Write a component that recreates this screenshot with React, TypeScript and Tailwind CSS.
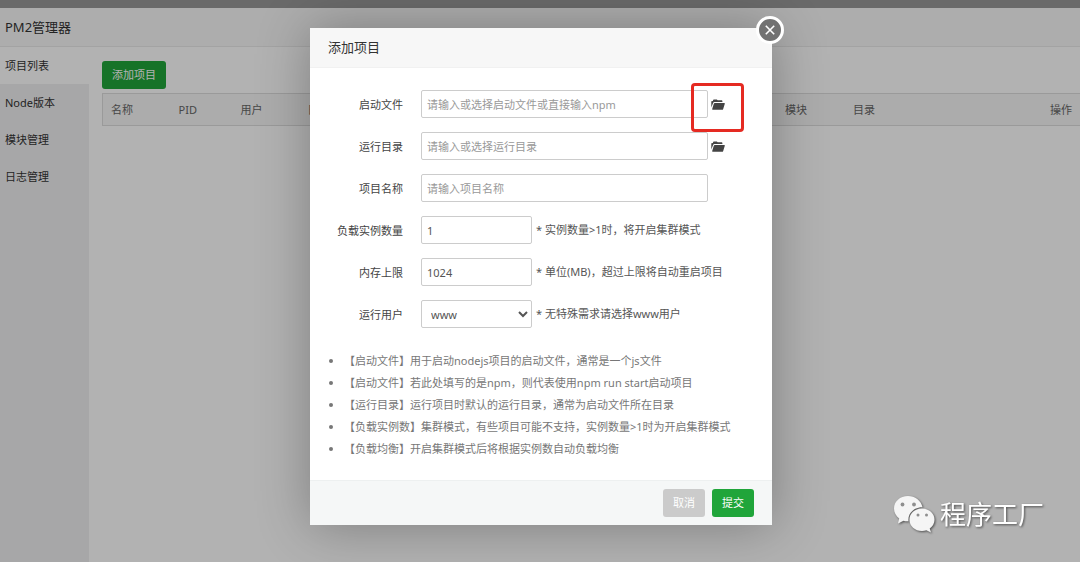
import React from 'react';

const menuItems = ['项目列表', 'Node版本', '模块管理', '日志管理'];

const columns = [
  { label: '名称', className: 'w-[68px]' },
  { label: 'PID', className: 'w-[62px]' },
  { label: '用户', className: 'w-[67px]' },
  { label: '日志', className: 'w-[68px]' },
  { label: '', className: '' },
  { label: '模块', className: 'w-[68px]' },
  { label: '目录', className: 'w-[178px]' },
  { label: '操作', className: 'w-[57px] text-right' }
];

const tips = [
  '【启动文件】用于启动nodejs项目的启动文件，通常是一个js文件',
  '【启动文件】若此处填写的是npm，则代表使用npm run start启动项目',
  '【运行目录】运行项目时默认的运行目录，通常为启动文件所在目录',
  '【负载实例数】集群模式，有些项目可能不支持，实例数量>1时为开启集群模式',
  '【负载均衡】开启集群模式后将根据实例数自动负载均衡'
];

const fieldClass =
  'h-7 border border-[#ccc] rounded-xs bg-white px-[5px] text-[#555] placeholder-[#999] outline-none focus:border-[#20a53a]';

interface FormRowProps {
  id: string;
  label: string;
  children: React.ReactNode;
}

function FormRow({ id, label, children }: FormRowProps) {
  return (
    <div className="flex items-center h-7">
      <label htmlFor={id} className="w-[93px] mr-[18px] pt-0.5 text-right text-[#444]">
        {label}
      </label>
      {children}
    </div>
  );
}

function FolderButton({ label, marked }: { label: string; marked?: boolean }) {
  return (
    <button type="button" aria-label={label} className="relative ml-[3px] text-[#444] cursor-pointer">
      <svg viewBox="0 0 14 11" className="w-[14px] h-[11px]" fill="currentColor">
        <path d="M0.3 8.600V2.200L1.900 1.900C2 0.900 2.500 0.500 3.300 0.500H5.400C6.200 0.500 6.500 1.300 7.100 1.300H10.400C11.100 1.300 11.400 1.700 11.400 2.300V2.900H3.500C2.800 2.900 2.400 3.200 2.200 3.800Z" />
        <path d="M3.800 3.900H13.200C13.800 3.900 14 4.200 13.800 4.800L12.200 9.900C12 10.500 11.700 10.800 11.100 10.800H1.700C1.200 10.800 1 10.500 1.200 10L2.800 4.700C3 4.200 3.300 3.900 3.800 3.900Z" />
      </svg>
      {marked && (
        <span className="absolute -left-5 -top-4 w-[53px] h-[49px] border-[3px] border-[#e52a22] rounded-sm pointer-events-none" />
      )}
    </button>
  );
}

function Hint({ children }: { children: React.ReactNode }) {
  return <span className="ml-1 text-[#555] whitespace-nowrap">{children}</span>;
}

function ManagerPage() {
  return (
    <div className="flex flex-col min-h-screen bg-white">
      <div className="h-2 bg-[#999]" />
      <header className="flex items-center h-[39px] px-[5px] pt-0.5 bg-[#f8f8f8] border-b border-[#eaeaea]">
        <h1 className="text-[13px] text-[#333]">PM2管理器</h1>
      </header>
      <div className="flex flex-1">
        <nav className="w-[89px] bg-[#f0f0f1]">
          {menuItems.map((item, index) => (
            <a
              key={item}
              href="#"
              className={`flex items-center h-[37px] px-[5px] pt-0.5 text-[#333] ${index === 0 ? 'bg-white' : ''}`}
            >
              {item}
            </a>
          ))}
        </nav>
        <main className="flex-1 pl-[13px] pt-[14px]">
          <button type="button" className="h-7 px-[10px] rounded-[3px] bg-[#20a53a] text-white">
            添加项目
          </button>
          <table className="w-full mt-1 table-fixed border border-r-0 border-[#ddd] bg-[#f6f6f6] text-[#666]">
            <thead>
              <tr className="h-8">
                {columns.map((column, index) => (
                  <th key={index} className={`px-2 pt-0.5 text-left font-normal whitespace-nowrap ${column.className}`}>
                    {column.label}
                  </th>
                ))}
              </tr>
            </thead>
          </table>
        </main>
      </div>
    </div>
  );
}

function AddProjectDialog() {
  return (
    <div
      role="dialog"
      aria-labelledby="dialog-title"
      className="relative w-[462px] bg-white shadow-[1px_1px_50px_rgba(0,0,0,0.3)]"
    >
      <button
        type="button"
        aria-label="关闭"
        className="absolute -right-3 -top-3 flex items-center justify-center w-7 h-7 rounded-full border-[3px] border-white bg-[#727272] text-white"
      >
        <svg viewBox="0 0 10 10" className="w-[10px] h-[10px]" fill="none" stroke="currentColor" strokeWidth="1.6">
          <path d="M0.8 0.8L9.2 9.2M9.2 0.8L0.8 9.2" />
        </svg>
      </button>

      <div className="flex items-center h-10 px-[18px] bg-[#f7f7f7] border-b border-[#f1f1f1]">
        <h2 id="dialog-title" className="text-[13px] text-[#333]">添加项目</h2>
      </div>

      <form>
        <div className="flex flex-col gap-[14px] pt-[22px]">
          <FormRow id="script" label="启动文件">
            <input id="script" type="text" placeholder="请输入或选择启动文件或直接输入npm" className={`w-[287px] ${fieldClass}`} />
            <FolderButton label="选择启动文件" marked />
          </FormRow>
          <FormRow id="path" label="运行目录">
            <input id="path" type="text" placeholder="请输入或选择运行目录" className={`w-[287px] ${fieldClass}`} />
            <FolderButton label="选择运行目录" />
          </FormRow>
          <FormRow id="name" label="项目名称">
            <input id="name" type="text" placeholder="请输入项目名称" className={`w-[287px] ${fieldClass}`} />
          </FormRow>
          <FormRow id="count" label="负载实例数量">
            <input id="count" type="text" defaultValue="1" className={`w-[111px] ${fieldClass}`} />
            <Hint>* 实例数量&gt;1时，将开启集群模式</Hint>
          </FormRow>
          <FormRow id="memory" label="内存上限">
            <input id="memory" type="text" defaultValue="1024" className={`w-[111px] ${fieldClass}`} />
            <Hint>* 单位(MB)，超过上限将自动重启项目</Hint>
          </FormRow>
          <FormRow id="user" label="运行用户">
            <select id="user" className={`w-[111px] ${fieldClass}`}>
              <option>www</option>
            </select>
            <Hint>* 无特殊需求请选择www用户</Hint>
          </FormRow>
        </div>

        <ul className="mt-[22px] pl-[34px] pb-5 list-disc text-[#777] leading-[22px]">
          {tips.map((tip) => (
            <li key={tip} className="whitespace-nowrap">{tip}</li>
          ))}
        </ul>

        <div className="flex items-center justify-end gap-[7px] h-[45px] px-[18px] bg-[#f5f7f7] border-t border-[#edf0f0]">
          <button type="button" className="h-7 px-[10px] rounded-[3px] bg-[#cbcbcb] text-white">取消</button>
          <button type="submit" className="h-7 px-[10px] rounded-[3px] bg-[#20a53a] text-white">提交</button>
        </div>
      </form>
    </div>
  );
}

function Watermark() {
  return (
    <div className="absolute right-9 bottom-[29px] flex items-center gap-[5px] text-white drop-shadow-[1px_1px_1px_rgba(0,0,0,0.55)] pointer-events-none">
      <svg viewBox="0 0 42 38" className="w-[42px] h-[38px]">
        <path
          fill="#f5f5f5"
          d="M15 1C7 1 1 6.500 1 13.500c0 4.200 2 7.500 5.200 9.900L5 28.500l5.500-2.800c1.700.5 3.300.6 5 .5C14.500 18.500 21 12 29.500 12.200 28 5.500 22 1 15 1z"
        />
        <path
          fill="#f5f5f5"
          d="M29 13.500c-7.200 0-12.500 5-12.500 11.200S21.800 36 29 36c1.500 0 3-.3 4.400-.8l4.600 2.300-1.300-4C39.700 31.400 41.500 28.300 41.500 24.700c0-6.200-5.500-11.200-12.500-11.200z"
        />
        <g fill="#8f8f8f">
          <circle cx="9.500" cy="9.500" r="1.900" />
          <circle cx="21" cy="9.500" r="1.900" />
          <circle cx="25" cy="20" r="1.500" />
          <circle cx="33.500" cy="20" r="1.500" />
        </g>
      </svg>
      <span className="text-[26px] leading-9">程序工厂</span>
    </div>
  );
}

export default function App() {
  return (
    <div className="relative overflow-hidden text-[11px] font-['Noto_Sans','Noto_Sans_CJK_SC',sans-serif]">
      <ManagerPage />
      <div className="absolute inset-0 flex items-start justify-center pt-7 pl-0.5 bg-black/30">
        <AddProjectDialog />
      </div>
      <Watermark />
    </div>
  );
}
